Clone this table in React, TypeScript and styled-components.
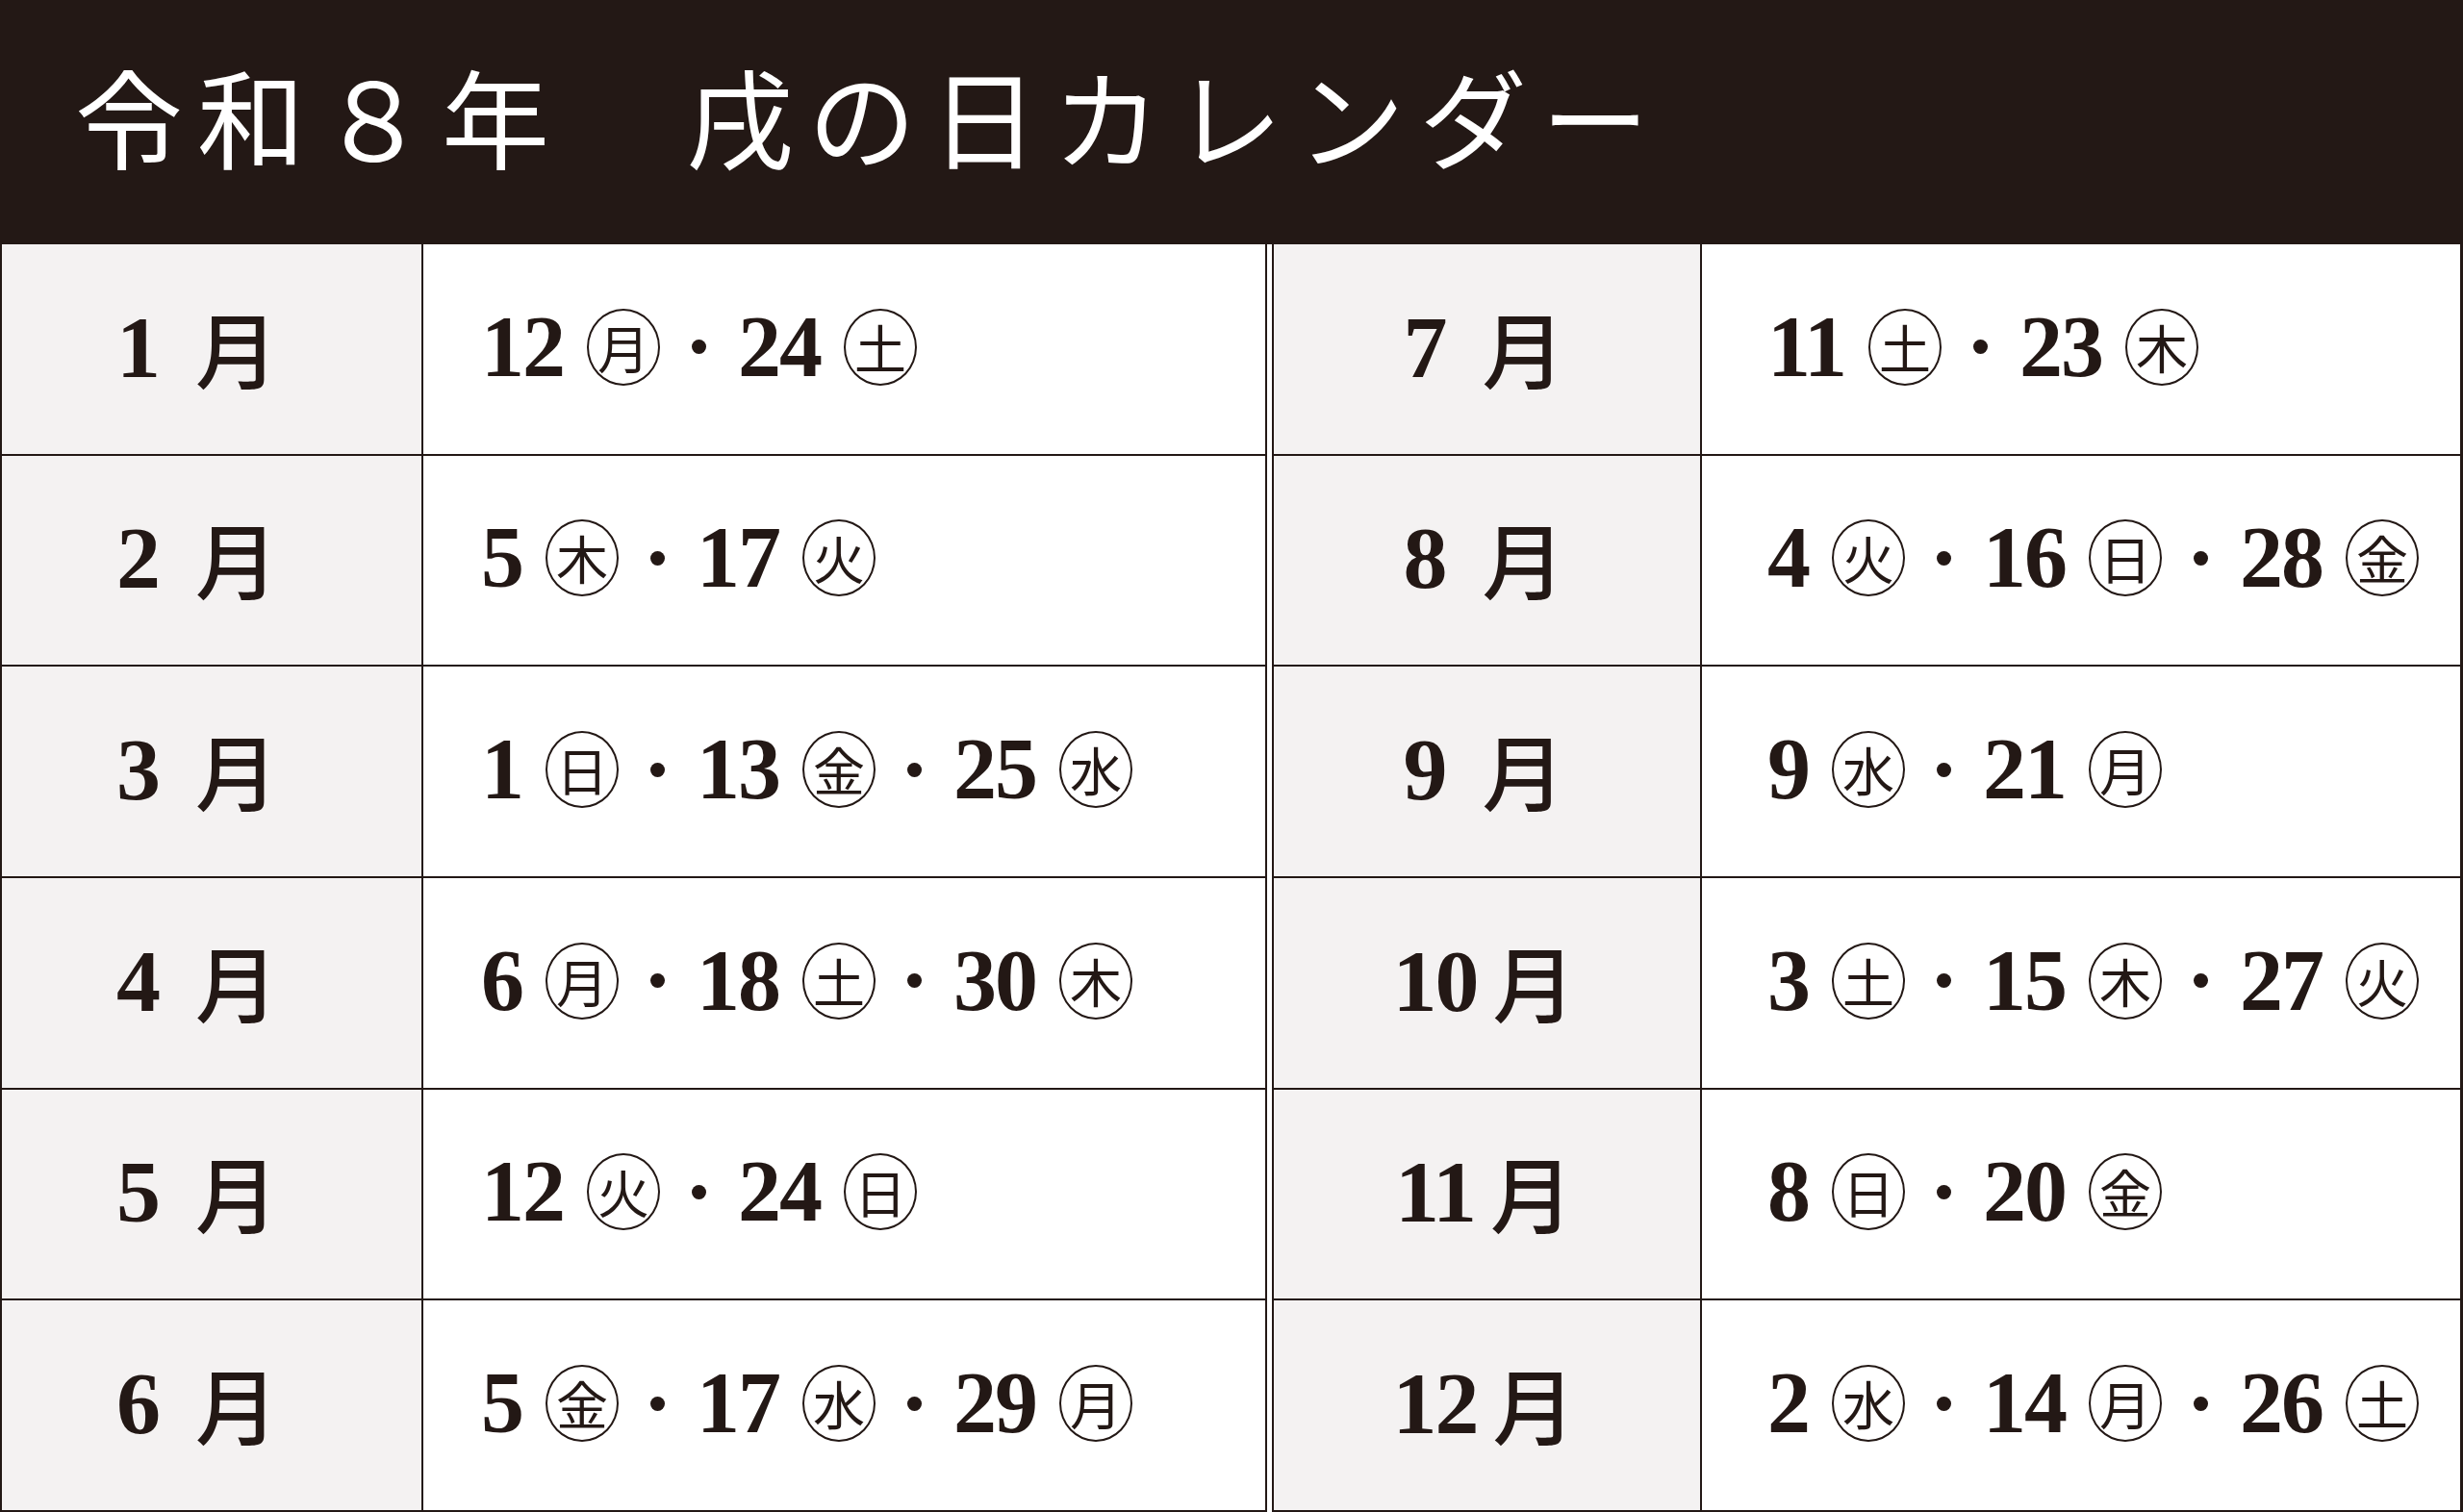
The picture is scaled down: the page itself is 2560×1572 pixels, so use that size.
import React from "react";
import styled, { createGlobalStyle } from "styled-components";

const INK = "#231815";

type Day = [number, string];

interface MonthData {
  month: number;
  days: Day[];
}

const leftMonths: MonthData[] = [
  { month: 1, days: [[12, "月"], [24, "土"]] },
  { month: 2, days: [[5, "木"], [17, "火"]] },
  { month: 3, days: [[1, "日"], [13, "金"], [25, "水"]] },
  { month: 4, days: [[6, "月"], [18, "土"], [30, "木"]] },
  { month: 5, days: [[12, "火"], [24, "日"]] },
  { month: 6, days: [[5, "金"], [17, "水"], [29, "月"]] },
];

const rightMonths: MonthData[] = [
  { month: 7, days: [[11, "土"], [23, "木"]] },
  { month: 8, days: [[4, "火"], [16, "日"], [28, "金"]] },
  { month: 9, days: [[9, "水"], [21, "月"]] },
  { month: 10, days: [[3, "土"], [15, "木"], [27, "火"]] },
  { month: 11, days: [[8, "日"], [20, "金"]] },
  { month: 12, days: [[2, "水"], [14, "月"], [26, "土"]] },
];

const GlobalStyle = createGlobalStyle`
  html, body {
    margin: 0;
    padding: 0;
    background: #ffffff;
  }
  body {
    font-family: "Liberation Serif", "Noto Sans CJK JP", serif;
    color: ${INK};
  }
`;

export default function App() {
  return (
    <>
      <GlobalStyle />
      <Page>
        <Header>
          <Title>令和８年　戌の日カレンダー</Title>
        </Header>
        <Body>
          <MonthTable months={leftMonths} side="left" />
          <Divider />
          <MonthTable months={rightMonths} side="right" />
        </Body>
      </Page>
    </>
  );
}

const MonthTable: React.FC<{ months: MonthData[]; side: "left" | "right" }> = ({ months, side }) => {
  return (
    <Half $side={side}>
      {months.map((m) => (
        <React.Fragment key={m.month}>
          <MonthCell $side={side}>
            <MonthNum $single={m.month < 10}>{m.month}</MonthNum>
            <MonthKanji>月</MonthKanji>
          </MonthCell>
          <DatesCell $side={side}>
            {m.days.map(([d, w], i) => (
              <React.Fragment key={d}>
                {i > 0 && <Dot />}
                <DayNum>{d}</DayNum>
                <Circled>{w}</Circled>
              </React.Fragment>
            ))}
          </DatesCell>
        </React.Fragment>
      ))}
    </Half>
  );
};

const Page = styled.div`
  width: 2560px;
  height: 1572px;
  display: flex;
  flex-direction: column;
  overflow: hidden;
`;

const Header = styled.div`
  height: 254px;
  background: ${INK};
  display: flex;
  align-items: center;
  padding: 0 0 16px 78px;
  box-sizing: border-box;
`;

const Title = styled.h1`
  margin: 0;
  color: #ffffff;
  font-family: "Noto Sans CJK JP", sans-serif;
  font-weight: 400;
  font-size: 112px;
  letter-spacing: 15px;
  line-height: 1;
`;

const Body = styled.div`
  flex: 1;
  display: flex;
`;

const Half = styled.div<{ $side: "left" | "right" }>`
  width: ${(p) => (p.$side === "left" ? "1317px" : "auto")};
  flex: ${(p) => (p.$side === "left" ? "none" : "1")};
  box-sizing: border-box;
  border-left: 2px solid ${INK};
  border-right: ${(p) => (p.$side === "left" ? "2px" : "3px")} solid ${INK};
  display: grid;
  grid-template-columns: ${(p) => (p.$side === "left" ? "438px" : "445px")} 1fr;
  grid-template-rows: repeat(6, 1fr);
`;

const Divider = styled.div`
  width: 5px;
  background: #ffffff;
`;

const MonthCell = styled.div<{ $side: "left" | "right" }>`
  background: #f4f2f2;
  border-right: 2px solid ${INK};
  border-bottom: 2px solid ${INK};
  display: flex;
  align-items: center;
  justify-content: center;
  padding-right: ${(p) => (p.$side === "left" ? "30px" : "6px")};
  padding-bottom: 4px;
  box-sizing: border-box;
`;

const MonthNum = styled.span<{ $single: boolean }>`
  font-family: "Liberation Serif", serif;
  font-weight: 700;
  font-size: 92px;
  letter-spacing: -2px;
  line-height: 1;
  margin-right: ${(p) => (p.$single ? "38px" : "16px")};
`;

const MonthKanji = styled.span`
  font-family: "Noto Sans CJK JP", sans-serif;
  font-weight: 500;
  font-size: 86px;
  line-height: 1;
`;

const DatesCell = styled.div<{ $side: "left" | "right" }>`
  border-bottom: 2px solid ${INK};
  background: #ffffff;
  display: flex;
  align-items: center;
  padding-left: ${(p) => (p.$side === "left" ? "60px" : "68px")};
  padding-bottom: 4px;
  box-sizing: border-box;
`;

const DayNum = styled.span`
  font-family: "Liberation Serif", serif;
  font-weight: 700;
  font-size: 90px;
  letter-spacing: -2px;
  line-height: 1;
  margin-right: 24px;
`;

const Circled = styled.span`
  width: 76px;
  height: 80px;
  box-sizing: border-box;
  border: 2.5px solid ${INK};
  border-radius: 50%;
  display: inline-flex;
  align-items: center;
  justify-content: center;
  font-family: "Noto Sans CJK JP", sans-serif;
  font-weight: 400;
  font-size: 54px;
  line-height: 1;
`;

const Dot = styled.span`
  width: 15px;
  height: 15px;
  border-radius: 50%;
  background: ${INK};
  margin: 0 33px;
`;
